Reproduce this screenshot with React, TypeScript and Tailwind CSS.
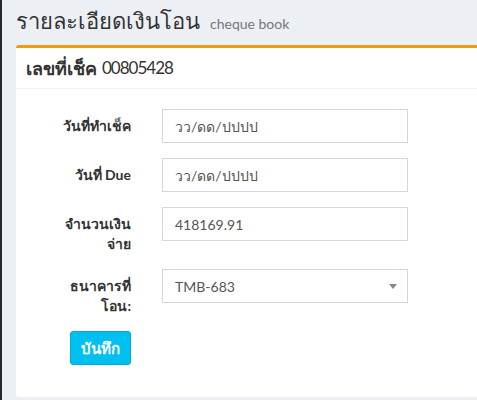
import React from "react";

function Row({ label, children }: { label: React.ReactNode; children: React.ReactNode }) {
  return (
    <div className="flex items-start mb-[15px]">
      <div className="w-[105px] pl-[30px] text-right pt-[7px] font-bold text-[14px] leading-[20px] text-[#333]">
        {label}
      </div>
      <div className="ml-[31px] w-[246px]">{children}</div>
    </div>
  );
}

function Input({ value }: { value: string }) {
  return (
    <div className="h-[34px] border border-[#d2d6de] bg-white px-3 flex items-center text-[14px] text-[#555]">
      {value}
    </div>
  );
}

export default function App() {
  return (
    <div
      className="w-[477px] h-[400px] overflow-hidden flex bg-[#ecf0f5]"
      style={{ fontFamily: '"Lato", "Noto Sans", sans-serif' }}
    >
      <div className="w-[2px] shrink-0 bg-[#222d32]" />
      <div className="flex-1 pl-[14px]">
        <div className="h-[45px] flex items-baseline pt-[6px]">
          <span className="text-[22px] leading-[30px] text-[#333]">รายละเอียดเงินโอน</span>
          <span className="ml-[10px] text-[14px] text-[#777]">cheque book</span>
        </div>
        <div className="w-[500px] h-[352px] bg-white border-t-[3px] border-[#f39c12] rounded-[3px]">
          <div className="h-[41px] border-b border-[#f4f4f4] px-[10px] flex items-center text-[18px] text-[#333]">
            <span className="font-bold">เลขที่เช็ค</span>
            <span className="ml-[5px] text-[17px] tracking-[-1px]">00805428</span>
          </div>
          <div className="pt-[20px] pl-[10px]">
            <Row label="วันที่ทำเช็ค">
              <Input value="วว/ดด/ปปปป" />
            </Row>
            <Row label="วันที่ Due">
              <Input value="วว/ดด/ปปปป" />
            </Row>
            <Row label={<>จำนวนเงิน<br />จ่าย</>}>
              <Input value="418169.91" />
            </Row>
            <Row label={<>ธนาคารที่<br />โอน:</>}>
              <div className="h-[34px] border border-[#d2d6de] bg-white pl-3 pr-[10px] flex items-center justify-between text-[14px] text-[#555]">
                <span>TMB-683</span>
                <svg width="8" height="5" viewBox="0 0 8 5">
                  <path d="M0 0 L8 0 L4 5 Z" fill="#888" />
                </svg>
              </div>
            </Row>
            <div className="pl-[44px]">
              <button className="h-[34px] w-[61px] rounded-[3px] bg-[#00c0ef] border border-[#00acd6] text-white font-bold text-[15px]">
                บันทึก
              </button>
            </div>
          </div>
        </div>
      </div>
    </div>
  );
}
